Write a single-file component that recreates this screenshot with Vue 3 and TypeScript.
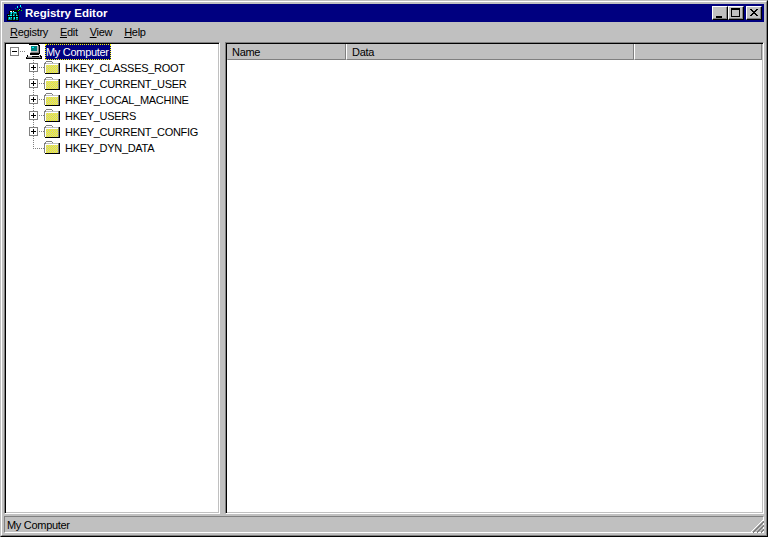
<script setup lang="ts">
const keys = [
  { name: 'HKEY_CLASSES_ROOT', expandable: true },
  { name: 'HKEY_CURRENT_USER', expandable: true },
  { name: 'HKEY_LOCAL_MACHINE', expandable: true },
  { name: 'HKEY_USERS', expandable: true },
  { name: 'HKEY_CURRENT_CONFIG', expandable: true },
  { name: 'HKEY_DYN_DATA', expandable: false },
]
const menus = [
  { key: 'R', rest: 'egistry' },
  { key: 'E', rest: 'dit' },
  { key: 'V', rest: 'iew' },
  { key: 'H', rest: 'elp' },
]

// Yellow half of the folder's 1px checker dither.
const ditherPixels: { x: number; y: number }[] = []
for (let y = 5; y < 13; y++) {
  for (let x = 40; x < 52; x++) {
    if ((x + y) % 2 === 0) ditherPixels.push({ x, y })
  }
}
</script>

<template>
  <div class="window">
    <div class="frame">
      <header class="titlebar">
        <svg class="app-icon" width="17" height="16" viewBox="0 0 17 16">
          <path fill="#000" d="M3 6h1V5h6v1h2v2h1v8H1V9h2z" />
          <path fill="#008080" d="M2 10h10v5H2zM4 7h7v3H4z" />
          <path fill="#00ffff" d="M2 10h1v1H2zM4 10h2v1H4zM7 10h1v1H7zM9 10h2v1H9zM3 12h1v2H3zM5 12h2v1H5zM8 12h1v2H8zM10 12h2v1h-2zM5 7h1v2H5zM8 7h2v1H8z" />
          <path fill="#fff" d="M4 6h2v1H4zM7 6h1v1H7z" />
          <path fill="#000" d="M2 11h10v1H2zM6 8h1v7H6zM9 9h1v6H9z" />
          <path fill="#000" d="M10 5h2V4h1V3h2v2h-1v1h-1v1h-2z" />
          <path fill="#00ff00" d="M12 5h1v1h-1zM15 5h1v1h-1z" />
          <path fill="#00ffff" d="M11 1h1v2h-1zM14 0h1v2h-1zM13 4h1v1h-1z" />
          <path fill="#008080" d="M15 2h1v1h-1zM9 3h1v1H9z" />
        </svg>
        <span class="title">Registry Editor</span>
        <div class="caption-buttons">
          <button class="cap" aria-label="Minimize">
            <svg width="14" height="12" viewBox="0 0 14 12"><path d="M3 9h6v2H3z" /></svg>
          </button>
          <button class="cap" aria-label="Maximize">
            <svg width="14" height="12" viewBox="0 0 14 12"><path d="M2 1h9v9H2zM3 3v6h7V3z" fill-rule="evenodd" /></svg>
          </button>
          <button class="cap close" aria-label="Close">
            <svg width="14" height="12" viewBox="0 0 14 12"><path d="M3 2h2v1h1v1h2V3h1V2h2v1h-1v1H9v1H8v1h1v1h1v1h1v1H9V8H8V7H6v1H5v1H3V8h1V7h1V6h1V5H5V4H4V3H3z" /></svg>
          </button>
        </div>
      </header>

      <nav class="menubar">
        <span v-for="m in menus" :key="m.key" class="menu-item"><u>{{ m.key }}</u>{{ m.rest }}</span>
      </nav>

      <main class="panes">
        <section class="tree sunken">
          <div class="row">
            <svg class="stub" width="39" height="16" viewBox="0 0 39 16">
              <path fill="#808080" d="M4 3h9v9H4zM5 4v7h7V4z" fill-rule="evenodd" />
              <path fill="#000" d="M6 7h5v1H6z" />
              <path fill="#808080" d="M14 7h1v1h-1zM16 7h1v1h-1zM18 7h1v1h-1z" />
              <!-- computer -->
              <path fill="#000" d="M23 0h10v1h1v9h-1v1h2v1h1v3H20v-2h1v-2h3V1h-1z" />
              <path fill="#c0c0c0" d="M24 1h8v8h-8zM22 11h12v3H22z" />
              <path fill="#008080" d="M25 2h6v5h-6z" />
              <path fill="#00ffff" d="M26 3h2v1h-2z" />
              <path fill="#fff" d="M24 1h8v1h-8zM24 2h1v6h-1zM22 11h11v1H22z" />
              <path fill="#808080" d="M32 2h1v7h-1zM25 8h7v1h-7zM21 13h14v1H21z" />
              <path fill="#000" d="M26 12h7v1h-7z" />
            </svg>
            <span class="label selected">My Computer</span>
          </div>
          <div v-for="k in keys" :key="k.name" class="row">
            <svg class="stub" width="54" height="16" viewBox="0 0 54 16">
              <template v-if="k.expandable">
                <path fill="#808080" d="M27 0h1v1h-1zM27 2h1v1h-1zM27 12h1v1h-1zM27 14h1v1h-1z" />
                <path fill="#808080" d="M23 3h9v9h-9zM24 4v7h7V4z" fill-rule="evenodd" />
                <path fill="#000" d="M25 7h5v1h-5zM27 5h1v5h-1z" />
                <path fill="#808080" d="M33 7h1v1h-1zM35 7h1v1h-1zM37 7h1v1h-1z" />
              </template>
              <path v-else fill="#808080" d="M27 0h1v1h-1zM27 2h1v1h-1zM27 4h1v1h-1zM27 6h1v1h-1zM27 8h1v1h-1zM29 8h1v1h-1zM31 8h1v1h-1zM33 8h1v1h-1zM35 8h1v1h-1zM37 8h1v1h-1z" />
              <!-- folder -->
              <path fill="#808080" d="M39 2h1V1h6v1h1v1h6v10H38V3h1z" />
              <path fill="#c0c0c0" d="M39 4h13v9H39zM40 2h6v2h-6zM46 3h6v1h-6z" />
              <path fill="#fff" d="M40 2h6v1h-6zM39 4h13v1H39zM39 5h1v8h-1z" />
              <rect v-for="p in ditherPixels" :key="`${p.x}-${p.y}`" :x="p.x" :y="p.y" width="1" height="1" fill="#ffff00" />
              <path fill="#000" d="M39 13h15v1H39zM53 3h1v11h-1z" />
            </svg>
            <span class="label">{{ k.name }}</span>
          </div>
        </section>

        <section class="list sunken">
          <div class="list-header">
            <div class="col name">Name</div>
            <div class="col data">Data</div>
            <div class="col rest"></div>
          </div>
        </section>
      </main>

      <footer class="statusbar">
        <div class="status-cell">My Computer</div>
        <svg class="grip" width="14" height="14" viewBox="0 0 14 14">
          <path fill="#fff" d="M12 1h1v1h-1zM11 2h1v1h-1zM10 3h1v1h-1zM9 4h1v1H9zM8 5h1v1H8zM7 6h1v1H7zM6 7h1v1H6zM5 8h1v1H5zM4 9h1v1H4zM3 10h1v1H3zM2 11h1v1H2zM1 12h1v1H1z" />
          <path fill="#808080" d="M13 2h1v2h-1zM12 3h1v2h-1zM11 4h1v2h-1zM10 5h1v2h-1zM9 6h1v2H9zM8 7h1v2H8zM7 8h1v2H7zM6 9h1v2H6zM5 10h1v2H5zM4 11h1v2H4zM3 12h1v2H3zM13 6h1v2h-1zM12 7h1v2h-1zM11 8h1v2h-1zM10 9h1v2h-1zM9 10h1v2H9zM8 11h1v2H8zM7 12h1v2H7zM13 10h1v2h-1zM12 11h1v2h-1zM11 12h1v2h-1z" />
        </svg>
      </footer>
    </div>
  </div>
</template>

<style>
html, body { margin: 0; background: #c0c0c0; }
</style>

<style scoped>
.window {
  box-sizing: border-box;
  width: 768px;
  height: 537px;
  border: 1px solid;
  border-color: #c0c0c0 #000 #000 #c0c0c0;
  font-family: "Liberation Sans", Arial, sans-serif;
  font-size: 11px;
  letter-spacing: -0.3px;
  color: #000;
  background: #c0c0c0;
}
.frame {
  box-sizing: border-box;
  height: 100%;
  border: 1px solid;
  border-color: #fff #808080 #808080 #fff;
  padding: 2px;
  display: flex;
  flex-direction: column;
}
.titlebar {
  height: 18px;
  flex: none;
  background: #000080;
  color: #fff;
  display: flex;
  align-items: center;
  padding: 0 2px;
}
.app-icon { flex: none; }
.title { margin-left: 2px; font-weight: 700; font-size: 11.5px; letter-spacing: 0; }
.caption-buttons { margin-left: auto; display: flex; }
.cap {
  box-sizing: border-box;
  width: 16px;
  height: 14px;
  padding: 0;
  background: #c0c0c0;
  border: 1px solid;
  border-color: #fff #000 #000 #fff;
  box-shadow: inset -1px -1px 0 #808080;
  display: flex;
  align-items: flex-start;
  justify-content: flex-start;
}
.cap.close { margin-left: 2px; }
.menubar {
  height: 20px;
  flex: none;
  display: flex;
  align-items: center;
  padding-left: 6px;
  gap: 12px;
}
.panes { flex: 1; min-height: 0; display: flex; gap: 5px; }
.sunken {
  box-sizing: border-box;
  border: 1px solid;
  border-color: #808080 #fff #fff #808080;
  box-shadow: inset 1px 1px 0 #000, inset -1px -1px 0 #c0c0c0;
  background: #fff;
}
.tree { width: 216px; flex: none; padding: 1px; }
.list { flex: 1; padding: 1px; }
.row { height: 16px; display: flex; align-items: center; }
.stub { flex: none; display: block; }
.label { margin-left: 5px; line-height: 16px; white-space: nowrap; }
.selected {
  background: #000080;
  color: #fff;
  padding: 0 2px 0 1px;
  margin-left: 0;
  outline: 1px dotted #ffff00;
  outline-offset: -1px;
}
.list-header { display: flex; height: 16px; }
.col {
  box-sizing: border-box;
  background: #c0c0c0;
  border-style: solid;
  border-width: 0 1px 1px 1px;
  border-color: #c0c0c0 #808080 #808080 #fff;
  padding-left: 5px;
  line-height: 16px;
}
.name { width: 119px; border-left-color: #c0c0c0; padding-left: 4px; }
.data { width: 288px; }
.rest { flex: 1; }
.statusbar {
  height: 17px;
  flex: none;
  margin-top: 2px;
  display: flex;
  position: relative;
}
.status-cell {
  flex: 1;
  box-sizing: border-box;
  border: 1px solid;
  border-color: #808080 #fff #fff #808080;
  padding-left: 2px;
  line-height: 16px;
}
.grip { position: absolute; right: 0; bottom: 0; }
</style>
